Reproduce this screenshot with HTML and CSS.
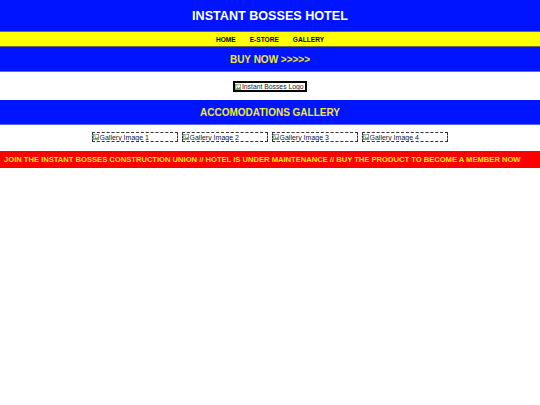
FILE: index.html
```html
<!DOCTYPE html>
<html>
<head>
<meta charset="utf-8">
<link rel="stylesheet" href="styles.css">
</head>
<body>
<header class="top">INSTANT BOSSES HOTEL</header>
<nav class="nav">
  <a class="nav-link">HOME</a>
  <a class="nav-link">E-STORE</a>
  <a class="nav-link">GALLERY</a>
</nav>
<div class="banner buy">BUY NOW &gt;&gt;&gt;&gt;&gt;</div>
<section class="logo-row">
  <span class="logo-img">
    <svg class="broken" viewBox="0 0 8 8" width="6" height="6"><rect x="0.5" y="0.5" width="7" height="7" fill="#fff" stroke="#888" stroke-width="1"/><path d="M1 7 L3.5 4 L5 5.5 L7 3 L7 7 Z" fill="#5a9e3a"/><circle cx="2.5" cy="2.5" r="1" fill="#4a8ed0"/></svg>Instant Bosses Logo
  </span>
</section>
<div class="banner gallery-title">ACCOMODATIONS GALLERY</div>
<section class="gallery">
  <span class="gimg"><svg class="broken" viewBox="0 0 8 8" width="6" height="6"><rect x="0.5" y="0.5" width="7" height="7" fill="#fff" stroke="#888" stroke-width="1"/><path d="M1 7 L3.5 4 L5 5.5 L7 3 L7 7 Z" fill="#5a9e3a"/><circle cx="2.5" cy="2.5" r="1" fill="#4a8ed0"/></svg>Gallery Image 1</span>
  <span class="gimg"><svg class="broken" viewBox="0 0 8 8" width="6" height="6"><rect x="0.5" y="0.5" width="7" height="7" fill="#fff" stroke="#888" stroke-width="1"/><path d="M1 7 L3.5 4 L5 5.5 L7 3 L7 7 Z" fill="#5a9e3a"/><circle cx="2.5" cy="2.5" r="1" fill="#4a8ed0"/></svg>Gallery Image 2</span>
  <span class="gimg"><svg class="broken" viewBox="0 0 8 8" width="6" height="6"><rect x="0.5" y="0.5" width="7" height="7" fill="#fff" stroke="#888" stroke-width="1"/><path d="M1 7 L3.5 4 L5 5.5 L7 3 L7 7 Z" fill="#5a9e3a"/><circle cx="2.5" cy="2.5" r="1" fill="#4a8ed0"/></svg>Gallery Image 3</span>
  <span class="gimg"><svg class="broken" viewBox="0 0 8 8" width="6" height="6"><rect x="0.5" y="0.5" width="7" height="7" fill="#fff" stroke="#888" stroke-width="1"/><path d="M1 7 L3.5 4 L5 5.5 L7 3 L7 7 Z" fill="#5a9e3a"/><circle cx="2.5" cy="2.5" r="1" fill="#4a8ed0"/></svg>Gallery Image 4</span>
</section>
<div class="notice">JOIN THE INSTANT BOSSES CONSTRUCTION UNION // HOTEL IS UNDER MAINTENANCE // BUY THE PRODUCT TO BECOME A MEMBER NOW</div>
</body>
</html>
```
FILE: styles.css
```css
html, body {
  margin: 0;
  padding: 0;
  background: #fff;
  font-family: "Liberation Sans", Arial, sans-serif;
}
.top {
  background: #0014ff;
  color: #fff;
  font-weight: bold;
  font-size: 12.6px;
  height: 31px;
  display: flex;
  align-items: center;
  justify-content: center;
}
.nav {
  background: #ffff00;
  border-top: 1px solid #6a6a50;
  border-bottom: 1px solid #6a6a50;
  height: 14px;
  display: flex;
  align-items: center;
  justify-content: center;
  gap: 14px;
}
.nav-link {
  color: #000;
  font-weight: bold;
  font-size: 6.6px;
}
.banner {
  background: #0014ff;
  color: #f2e63a;
  font-weight: bold;
  font-size: 10px;
  display: flex;
  align-items: center;
  justify-content: center;
}
.buy {
  height: 24px;
  border-bottom: 1px solid #5a6aff;
}
.logo-row {
  height: 28px;
  display: flex;
  justify-content: center;
  align-items: flex-start;
}
.logo-img {
  margin-top: 9px;
  border: 2px solid #000;
  height: 7px;
  padding-right: 1px;
  display: flex;
  align-items: center;
  font-size: 6.8px;
  color: #222;
  white-space: nowrap;
}
.broken {
  flex: none;
  margin-right: 0.5px;
}
.gallery-title {
  height: 24px;
  border-bottom: 1px solid #5a6aff;
}
.gallery {
  height: 26px;
  display: flex;
  justify-content: center;
  align-items: flex-start;
  gap: 4px;
}
.gimg {
  margin-top: 7px;
  width: 84px;
  height: 8px;
  border: 1px dashed #333;
  display: flex;
  align-items: center;
  font-size: 7px;
  color: #222;
  white-space: nowrap;
  overflow: hidden;
}
.notice {
  background: #ff0000;
  color: #ffe800;
  font-weight: bold;
  font-size: 7.6px;
  height: 17px;
  display: flex;
  align-items: center;
  padding-left: 4px;
  white-space: nowrap;
}
```
